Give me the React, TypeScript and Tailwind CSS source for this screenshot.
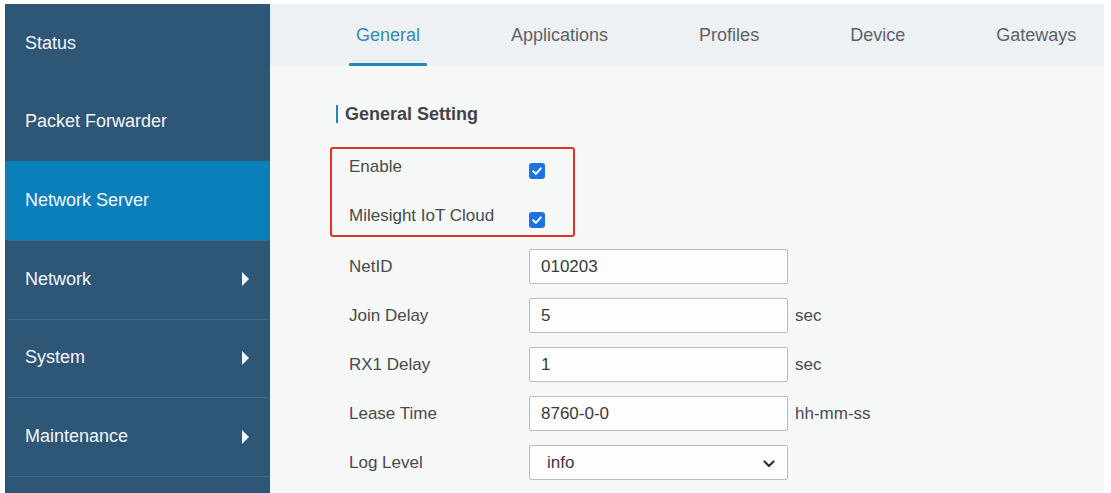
import React from "react";

const font = { fontFamily: '"Liberation Sans", Arial, sans-serif' };

function Arrow() {
  return (
    <svg width="8" height="14" viewBox="0 0 8 14" className="absolute left-[237px] top-1/2 -translate-y-1/2">
      <polygon points="0,0 7,7 0,14" fill="#f4f7fa" />
    </svg>
  );
}

function SideItem({ label, active, arrow, sep }: { label: string; active?: boolean; arrow?: boolean; sep?: boolean }) {
  return (
    <div className={`relative shrink-0 h-[78.67px] flex items-center ${active ? "bg-[#0a7fba]" : ""}`}>
      {sep && <div className="absolute top-0 left-[3px] right-0 h-px bg-[#42688a]" />}
      <span className="pl-[20px] text-[18px] text-[#f4f7fa]">{label}</span>
      {arrow && <Arrow />}
    </div>
  );
}

function Check() {
  return (
    <div className="w-[16px] h-[16px] rounded-[3px] bg-[#1b72e0] flex items-center justify-center mt-[6px]">
      <svg width="12" height="12" viewBox="0 0 12 12">
        <path d="M2.2 6.3 L4.9 8.9 L9.8 3.4" stroke="white" strokeWidth="2" fill="none" strokeLinecap="round" strokeLinejoin="round" />
      </svg>
    </div>
  );
}

function InputRow({ label, value, unit, select }: { label: string; value: string; unit?: string; select?: boolean }) {
  return (
    <div className="flex items-center h-[35px]">
      <div className="w-[180px] text-[17px] text-[#4a4a4a]">{label}</div>
      <div className="relative w-[259px] h-[35px] border border-[#bcbcbc] rounded-[2px] bg-[#fdfdfd] flex items-center">
        <span className={`${select ? "pl-[17px]" : "pl-[11px]"} text-[17px] text-[#3a3a3a]`}>{value}</span>
        {select && (
          <svg width="12" height="8" viewBox="0 0 12 8" className="absolute right-[12px] top-[14px]">
            <path d="M1.5 1.5 L6 6 L10.5 1.5" stroke="#333" strokeWidth="2.2" fill="none" strokeLinecap="round" strokeLinejoin="round" />
          </svg>
        )}
      </div>
      {unit && <span className="ml-[7px] text-[17px] text-[#4a4a4a]">{unit}</span>}
    </div>
  );
}

export default function App() {
  const tabs = ["General", "Applications", "Profiles", "Device", "Gateways"];
  return (
    <div style={font} className="w-[1111px] h-[493px] bg-white pt-[4px] pl-[5px] flex overflow-hidden">
      <div className="w-[265px] h-full bg-[#2e5677] flex flex-col overflow-hidden">
        <SideItem label="Status" />
        <SideItem label="Packet Forwarder" />
        <SideItem label="Network Server" active />
        <SideItem label="Network" arrow sep />
        <SideItem label="System" arrow sep />
        <SideItem label="Maintenance" arrow sep />
        <SideItem label="" sep />
      </div>
      <div className="w-[834px] h-full bg-[#f6f8f8] flex flex-col">
        <div className="h-[62px] shrink-0 bg-[#edf1f3] flex items-end pl-[79px] gap-[77px]">
          {tabs.map((t, i) => (
            <div key={t} className="relative px-[7px] h-full flex items-center">
              <span className={`text-[18px] ${i === 0 ? "text-[#3589b3]" : "text-[#5e6266]"}`}>{t}</span>
              {i === 0 && <div className="absolute left-0 right-0 bottom-0 h-[3px] bg-[#1f88b5] rounded-[1px]" />}
            </div>
          ))}
        </div>
        <div className="pl-[60px] flex flex-col">
          <div className="mt-[39px] ml-[6px] flex items-center h-[18px]">
            <div className="w-[2px] h-[18px] bg-[#1f88b5]" />
            <span className="ml-[7px] text-[18px] font-bold text-[#444] leading-[18px]">General Setting</span>
          </div>
          <div className="mt-[24px] w-[245px] border-[2.5px] border-[#e3302a] rounded-[3px] pl-[17px] pt-[2px] pb-[1px] flex flex-col gap-[15px]">
            <div className="flex items-center h-[34px]">
              <div className="w-[180px] text-[17px] text-[#4a4a4a] -mt-[2px]">Enable</div>
              <Check />
            </div>
            <div className="flex items-center h-[34px]">
              <div className="w-[180px] text-[17px] text-[#4a4a4a] -mt-[2px]">Milesight IoT Cloud</div>
              <Check />
            </div>
          </div>
          <div className="mt-[12px] pl-[19px] flex flex-col gap-[14px]">
            <InputRow label="NetID" value="010203" />
            <InputRow label="Join Delay" value="5" unit="sec" />
            <InputRow label="RX1 Delay" value="1" unit="sec" />
            <InputRow label="Lease Time" value="8760-0-0" unit="hh-mm-ss" />
            <InputRow label="Log Level" value="info" select />
          </div>
        </div>
      </div>
    </div>
  );
}
